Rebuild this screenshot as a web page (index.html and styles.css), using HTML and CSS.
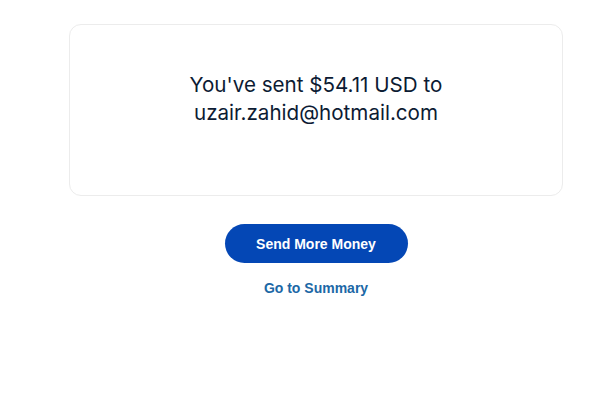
FILE: index.html
```html
<!DOCTYPE html>
<html lang="en">
<head>
    <meta charset="UTF-8">
    <meta name="viewport" content="width=device-width, initial-scale=1.0">
    <title>Money Sent</title>
    <link rel="stylesheet" href="styles.css">
</head>
<body>

<main class="page">
    <section class="confirm-card">
        <p class="confirm-text">You've sent $54.11 USD to<br>uzair.zahid@hotmail.com</p>
    </section>

    <div class="actions">
        <button class="btn-primary">Send More Money</button>
        <a class="link-summary" href="#">Go to Summary</a>
    </div>
</main>

</body>
</html>
```

FILE: styles.css
```css
body {
    background-color: #ffffff;
    color: #001435;
    font-family: "Liberation Sans", Arial, sans-serif;
    margin: 0;
}

.page {
    width: 494px;
    margin-left: 69px;
    padding-top: 24px;
}

.confirm-card {
    border: 1px solid #ececec;
    border-radius: 12px;
    padding: 46px 20px 68px;
    text-align: center;
}

.confirm-text {
    margin: 0;
    font-family: Inter, "Liberation Sans", sans-serif;
    font-size: 20.6px;
    line-height: 28px;
    color: #0c1b33;
}

.actions {
    display: flex;
    flex-direction: column;
    align-items: center;
    padding-top: 28px;
}

.btn-primary {
    background-color: #0447b5;
    color: #ffffff;
    border: none;
    border-radius: 20px;
    width: 183px;
    height: 39px;
    font-family: "Liberation Sans", Arial, sans-serif;
    font-size: 14px;
    font-weight: bold;
    cursor: pointer;
}

.link-summary {
    margin-top: 17px;
    color: #1c68a6;
    font-size: 14px;
    font-weight: bold;
    text-decoration: none;
}
```
